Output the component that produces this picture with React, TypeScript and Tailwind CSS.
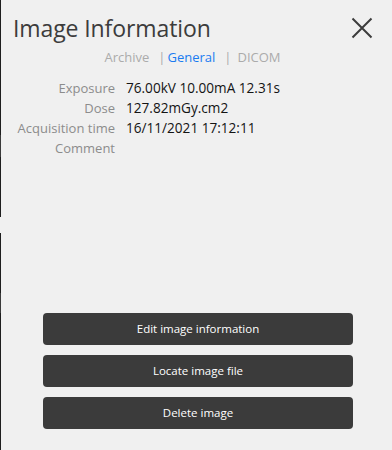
import React from 'react';

const rows: { label: string; value: string }[] = [
  { label: 'Exposure', value: '76.00kV 10.00mA 12.31s' },
  { label: 'Dose', value: '127.82mGy.cm2' },
  { label: 'Acquisition time', value: '16/11/2021 17:12:11' },
  { label: 'Comment', value: '' },
];

const actions = ['Edit image information', 'Locate image file', 'Delete image'];

export default function App() {
  return (
    <div
      className="flex h-[450px] w-[392px] overflow-hidden bg-[#f0f0f0]"
      style={{ fontFamily: '"Open Sans", "Noto Sans", sans-serif' }}
    >
      {/* window edge on the left */}
      <div className="flex w-px shrink-0 flex-col">
        <div className="h-[135px] bg-[#1e1e1e]" />
        <div className="h-[22px] bg-[#3a3a3a]" />
        <div className="h-[60px] bg-[#1e1e1e]" />
        <div className="h-[16px]" />
        <div className="h-[60px] bg-[#1e1e1e]" />
        <div className="h-[20px] bg-[#3a3a3a]" />
        <div className="flex-1 bg-[#1e1e1e]" />
      </div>

      <div className="flex flex-1 flex-col">
        {/* header */}
        <div className="flex items-center justify-between pl-3 pr-[18px] pt-[13px]">
          <h1 className="text-[23px] leading-[30px] tracking-[-0.1px] text-[#3c3c3c]">Image Information</h1>
          <button className="flex h-6 w-6 items-center justify-center text-[#3c3c3c]">
            <svg width="22" height="22" viewBox="0 0 22 22" fill="none" stroke="currentColor" strokeWidth="2">
              <path d="M1.5 1.5 L20.5 20.5 M20.5 1.5 L1.5 20.5" />
            </svg>
          </button>
        </div>

        {/* tabs */}
        <div className="mt-[5px] flex items-center justify-center pr-2 text-[13px] leading-[18px]">
          <span className="text-[#ababab]">Archive</span>
          <span className="ml-[9px] mr-[2px] text-[#ababab]">|</span>
          <span className="text-[#1a7cf0]">General</span>
          <span className="ml-[9px] mr-[6px] text-[#ababab]">|</span>
          <span className="text-[#ababab]">DICOM</span>
        </div>

        {/* info rows */}
        <div className="mt-[12px] grid grid-cols-[114px_1fr] gap-x-[11px] leading-[20px]">
          {rows.map((r) => (
            <React.Fragment key={r.label}>
              <span className="text-right text-[13px] text-[#8c8c8c]">{r.label}</span>
              <span className="text-[13.6px] text-[#141414]">{r.value}</span>
            </React.Fragment>
          ))}
        </div>

        <div className="flex-1" />

        {/* actions */}
        <div className="flex flex-col items-center gap-[10px] pb-[21px] pl-[3px]">
          {actions.map((a) => (
            <button
              key={a}
              className="h-[32px] w-[310px] rounded-[4px] bg-[#3b3b3b] text-[11.5px] text-white"
            >
              {a}
            </button>
          ))}
        </div>
      </div>
    </div>
  );
}
